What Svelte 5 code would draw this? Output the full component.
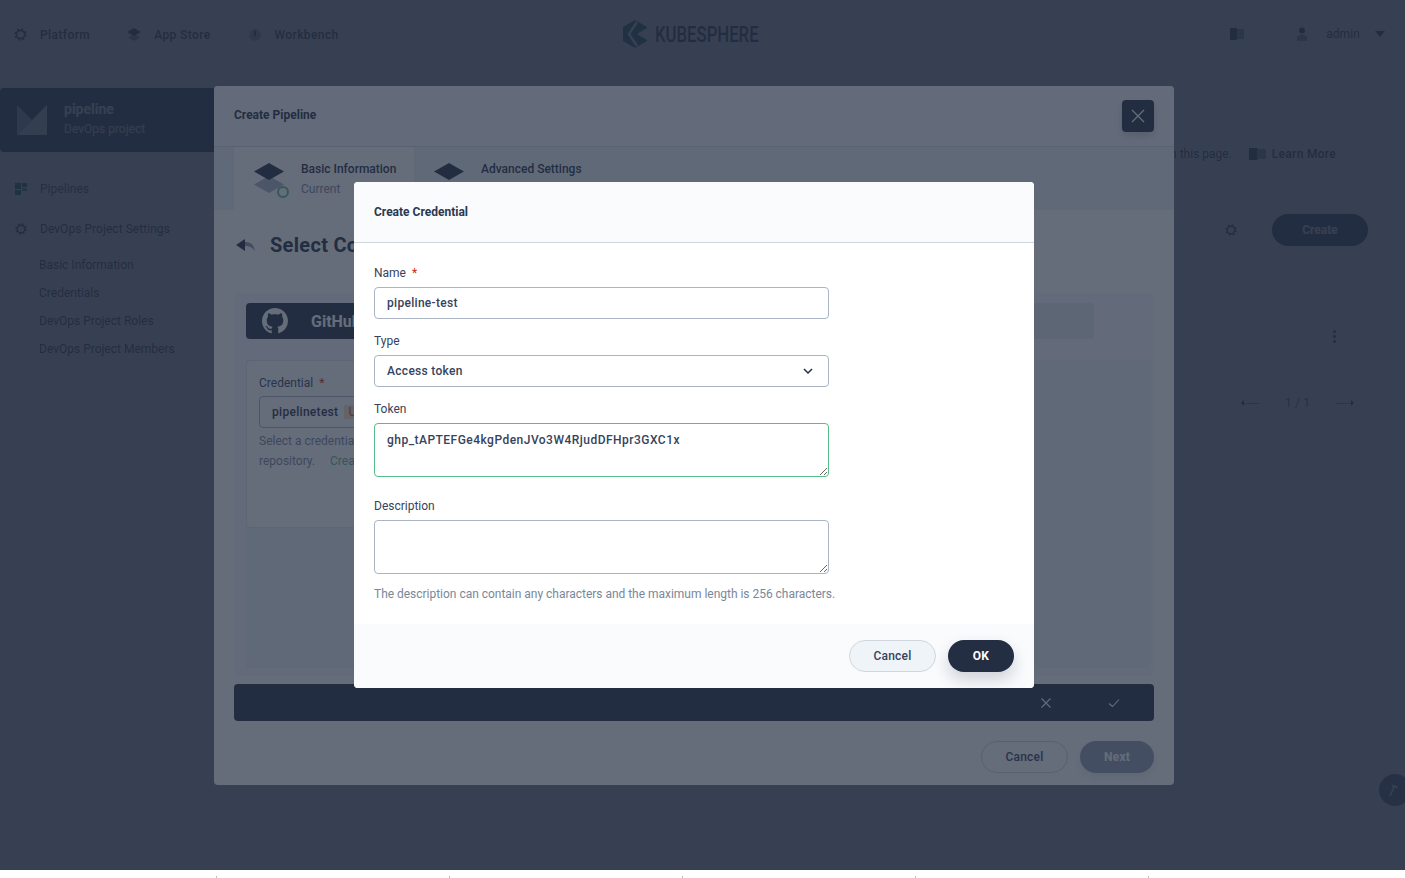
<script>
  const sideLinks = ['Basic Information', 'Credentials', 'DevOps Project Roles', 'DevOps Project Members'];
  const footerMarks = [1, 2, 3, 4, 5];
</script>

{#snippet gear(size)}
  <svg class="gear" width={size} height={size} viewBox="0 0 16 16" fill="none" stroke="currentColor">
    <circle cx="8" cy="8" r="5" stroke-width="1.800" />
    <circle cx="8" cy="8" r="6.800" stroke-width="1.600" stroke-dasharray="2.700 2.640" />
  </svg>
{/snippet}

{#snippet book(w, h)}
  <svg width={w} height={h} viewBox="0 0 14 12" preserveAspectRatio="none">
    <rect width="7" height="12" fill="#242e42" />
    <rect x="7" y="1" width="7" height="10" fill="#7f8ea3" />
  </svg>
{/snippet}

<div class="screen">
  <div class="page">
    <header class="topbar">
      <nav class="topnav">
        <span class="navitem">{@render gear(13)}Platform</span>
        <span class="navitem">
          <svg width="14" height="14" viewBox="0 0 14 14"><path d="M7 6l6 3.500-6 3.500-6-3.500z" fill="#7f8ea3" /><path d="M7 0l7 4-7 4-7-4z" fill="#242e42" /></svg>
          App Store
        </span>
        <span class="navitem">
          <svg width="14" height="14" viewBox="0 0 14 14"><circle cx="7" cy="7" r="6" fill="#a9b4c1" /><path d="M6 2.500h2V7L7 9 6 7z" fill="#242e42" /></svg>
          Workbench
        </span>
      </nav>
      <div class="logo">
        <svg width="28" height="28" viewBox="0 0 28 28">
          <path d="M13 0l12 7v14l-12 7-12-7V7z" fill="#0f5a60" />
          <path d="M15 2L7 14l8 12" fill="none" stroke="#fff" stroke-width="2.500" />
          <path d="M15 14l11-6.500v13z" fill="#fff" />
        </svg>
        <span class="wordmark">KUBESPHERE</span>
      </div>
      <div class="user">
        {@render book(14, 12)}
        <svg class="person" width="12" height="14" viewBox="0 0 12 14"><circle cx="6" cy="3.500" r="3" fill="#242e42" /><path d="M1 14V9.500L4 7.500h4l3 2V14z" fill="#7f8ea3" /></svg>
        <span class="username">admin</span>
        <span class="caret"></span>
      </div>
    </header>

    <div class="workspace">
      <aside class="sidebar">
        <div class="project">
          <svg width="30" height="30" viewBox="0 0 30 30">
            <path d="M0 0l15 15L0 30z" fill="#a9b4c1" />
            <path d="M30 0v30H0z" fill="#e3e9ef" />
          </svg>
          <div>
            <div class="project-name">pipeline</div>
            <div class="project-type">DevOps project</div>
          </div>
        </div>
        <div class="sidegroup first">
          <svg width="12" height="12" viewBox="0 0 12 12"><rect width="6" height="6" fill="#0f5a60" /><rect x="7" width="5" height="4" fill="#0f5a60" /><rect y="7" width="6" height="5" fill="#0f5a60" /><rect x="7" y="5" width="5" height="3" fill="#5d8a94" /></svg>
          <span class="active-link">Pipelines</span>
        </div>
        <div class="sidegroup">{@render gear(12)}DevOps Project Settings</div>
        <ul class="sidelinks">
          {#each sideLinks as link}
            <li>{link}</li>
          {/each}
        </ul>
      </aside>

      <main class="content">
        <p class="hint-line">
          <span>n this page.</span>
          {@render book(17, 12)}
          <span class="learn">Learn More</span>
        </p>
        <div class="toolbar">
          {@render gear(12)}
          <span class="create">Create</span>
        </div>
        <div class="more"><i></i><i></i><i></i></div>
        <div class="pager">
          <span class="arrow left"></span>
          <span>1 / 1</span>
          <span class="arrow right"></span>
        </div>
      </main>
    </div>

    <button class="tool" aria-label="Toolbox">
      <svg width="14" height="14" viewBox="0 0 14 14" stroke="#fff" fill="none"><path d="M4 13L8.500 3" stroke-width="1.600" /><path d="M6 2.500l5.500 2" stroke-width="2" /></svg>
    </button>

    <div class="overlay"></div>

    <section class="pipeline-modal">
      <div class="pm-head">
        <span>Create Pipeline</span>
        <button class="close" aria-label="Close">
          <svg width="16" height="16" viewBox="0 0 16 16" stroke="#fff" stroke-width="1.300" fill="none"><path d="M2 2l12 12M14 2L2 14" /></svg>
        </button>
      </div>
      <div class="steps">
        <div class="step active">
          <svg width="40" height="40" viewBox="0 0 40 40">
            <path d="M15 13l15 8.500-15 8.500L0 21.500z" fill="#a9b4c1" />
            <path d="M15 0l15 8.500-15 8.500L0 8.500z" fill="#242e42" />
            <circle cx="29" cy="29" r="5" fill="#fff" stroke="#55bc8a" stroke-width="2" />
          </svg>
          <div>
            <div class="step-title">Basic Information</div>
            <div class="step-sub">Current</div>
          </div>
        </div>
        <div class="step">
          <svg width="40" height="40" viewBox="0 0 40 40"><path d="M15 0l15 8.500-15 8.500L0 8.500z" fill="#242e42" /></svg>
          <div class="step-title">Advanced Settings</div>
        </div>
      </div>
      <div class="pm-body">
        <div class="repo-title">
          <svg width="20" height="16" viewBox="0 0 20 16">
            <path d="M9 2v12L0 8z" fill="#242e42" />
            <path d="M9 5c6 0 9 3 10 9-2-3-5-5-10-5z" fill="#8a98a8" />
          </svg>
          <h2>Select Code</h2>
        </div>
        <div class="repo-card">
          <div class="tabs">
            <div class="tab selected">
              <svg width="26" height="26" viewBox="0 0 16 16"><path fill="#fff" d="M8 0C3.580 0 0 3.580 0 8c0 3.540 2.290 6.530 5.470 7.590.4.070.55-.17.55-.38 0-.19-.01-.82-.01-1.490-2.010.37-2.530-.49-2.690-.94-.09-.23-.48-.94-.82-1.130-.28-.15-.68-.52-.01-.53.63-.01 1.080.58 1.230.82.72 1.210 1.870.87 2.330.66.07-.52.28-.87.51-1.070-1.780-.2-3.640-.89-3.640-3.950 0-.87.31-1.590.82-2.150-.08-.2-.36-1.020.08-2.120 0 0 .67-.21 2.200.82.64-.18 1.320-.27 2-.27.68 0 1.360.09 2 .27 1.530-1.040 2.200-.82 2.200-.82.44 1.100.16 1.920.08 2.120.51.56.82 1.270.82 2.150 0 3.070-1.870 3.750-3.650 3.950.29.25.54.73.54 1.480 0 1.070-.01 1.930-.01 2.200 0 .21.15.46.55.38A8.013 8.013 0 0016 8c0-4.420-3.580-8-8-8z" /></svg>
              <span>GitHub</span>
            </div>
            <div class="tab rest"></div>
          </div>
          <div class="repo-panels">
            <div class="cred-form">
              <div class="cred-label">Credential <b>*</b></div>
              <div class="cred-select">pipelinetest <span class="tag">U</span></div>
              <p class="cred-hint">Select a credential<br />repository. <span class="link">Create</span></p>
            </div>
            <div class="repo-list"></div>
          </div>
        </div>
        <div class="confirm-bar">
          <svg width="12" height="12" viewBox="0 0 12 12" stroke="#fff" stroke-width="1.100" fill="none"><path d="M1.500 1.500l9 9M10.500 1.500l-9 9" /></svg>
          <svg width="14" height="12" viewBox="0 0 14 12" stroke="#fff" stroke-width="1.100" fill="none"><path d="M2 6.500l3.500 3L12 2.500" /></svg>
        </div>
        <div class="pm-foot">
          <span class="btn ghost">Cancel</span>
          <span class="btn disabled">Next</span>
        </div>
      </div>
    </section>

    <div class="overlay"></div>

    <section class="cred-modal">
      <div class="cm-head">Create Credential</div>
      <form class="cm-body">
        <label class="field-label" for="cred-name">Name <b>*</b></label>
        <input id="cred-name" class="field" value="pipeline-test" />

        <label class="field-label gap" for="cred-type">Type</label>
        <div id="cred-type" class="field select">
          <span>Access token</span>
          <svg width="12" height="12" viewBox="0 0 12 12" fill="none" stroke="#242e42" stroke-width="1.500"><path d="M2 4l4 4 4-4" /></svg>
        </div>

        <label class="field-label gap" for="cred-token">Token</label>
        <textarea id="cred-token" class="field area focus">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</textarea>

        <label class="field-label gap-lg" for="cred-desc">Description</label>
        <textarea id="cred-desc" class="field area"></textarea>
        <p class="desc">The description can contain any characters and the maximum length is 256 characters.</p>
      </form>
      <div class="cm-foot">
        <span class="btn light">Cancel</span>
        <span class="btn primary">OK</span>
      </div>
    </section>
  </div>

  <div class="marks">
    {#each footerMarks as mark (mark)}
      <i></i>
    {/each}
  </div>
</div>

<style>
  :global(body) {
    margin: 0;
    background: #fff;
  }

  .screen {
    width: 1405px;
    height: 878px;
    overflow: hidden;
    font-family: Roboto, "Liberation Sans", sans-serif;
    font-size: 12px;
    color: #242e42;
  }

  .page {
    position: relative;
    height: 870px;
    background: #ffffff;
    overflow: hidden;
  }

  .marks {
    display: flex;
    gap: 232px;
    padding: 6px 0 0 216px;
  }

  .marks i {
    width: 1px;
    height: 2px;
    background: #b5bcc6;
  }

  .overlay {
    position: absolute;
    inset: 0;
    background: rgba(35, 45, 65, 0.7);
  }

  /* page under the dialogs */
  .topbar {
    position: relative;
    display: flex;
    align-items: center;
    justify-content: space-between;
    height: 68px;
    padding: 0 20px 0 14px;
  }

  .topnav {
    display: flex;
    gap: 37px;
    padding-top: 1px;
  }

  .navitem {
    display: flex;
    align-items: center;
    gap: 13px;
    font-weight: 500;
    letter-spacing: 0.4px;
  }

  .logo {
    position: absolute;
    left: 622px;
    top: 20px;
    display: flex;
    align-items: center;
    gap: 5px;
  }

  .wordmark {
    display: inline-block;
    font-size: 22px;
    font-weight: 500;
    transform: scaleX(0.76);
    transform-origin: left center;
    white-space: nowrap;
  }

  .user {
    display: flex;
    align-items: center;
    gap: 8px;
  }

  .person {
    margin-left: 44px;
  }

  .username {
    margin-left: 10px;
    font-size: 12px;
    letter-spacing: 0.1px;
  }

  .caret {
    margin-left: 7px;
    border: 5px solid transparent;
    border-top: 6px solid #242e42;
    border-bottom: 0;
  }

  .workspace {
    display: flex;
    padding-top: 20px;
  }

  .sidebar {
    width: 220px;
  }

  .project {
    display: flex;
    align-items: center;
    gap: 17px;
    height: 64px;
    padding-left: 17px;
    background: #242e42;
    border-radius: 4px;
    box-sizing: border-box;
  }

  .project-name {
    margin-top: -2px;
    font-size: 14px;
    font-weight: 700;
    line-height: 20px;
    color: #fff;
  }

  .project-type {
    line-height: 20px;
    color: #e3e9ef;
  }

  .sidegroup {
    display: flex;
    align-items: center;
    gap: 13px;
    height: 20px;
    margin-top: 20px;
    padding-left: 15px;
    letter-spacing: 0.05px;
  }

  .sidegroup.first {
    margin-top: 27px;
  }

  .active-link {
    color: #2e4050;
  }

  .sidelinks {
    list-style: none;
    margin: 12px 0 0;
    padding: 0 0 0 39px;
  }

  .sidelinks li {
    height: 28px;
    line-height: 28px;
  }

  .content {
    flex: 1;
    padding-right: 37px;
  }

  .hint-line {
    display: flex;
    align-items: center;
    justify-content: flex-end;
    gap: 6px;
    height: 20px;
    margin: 56px 32px 0 0;
  }

  .hint-line span:first-child {
    margin-right: 11px;
  }

  .learn {
    font-weight: 500;
    letter-spacing: 0.3px;
  }

  .toolbar {
    display: flex;
    align-items: center;
    justify-content: flex-end;
    gap: 35px;
    margin-top: 50px;
  }

  .create {
    width: 96px;
    height: 32px;
    line-height: 32px;
    text-align: center;
    font-weight: 700;
    color: #fff;
    background: #242e42;
    border-radius: 16px;
  }

  .more {
    display: flex;
    flex-direction: column;
    align-items: flex-end;
    gap: 2px;
    margin: 84px 32px 0 0;
  }

  .more i {
    width: 3px;
    height: 3px;
    background: #242e42;
    border-radius: 50%;
  }

  .pager {
    display: flex;
    align-items: center;
    justify-content: flex-end;
    gap: 26px;
    margin-top: 53px;
    padding-right: 15px;
    color: #4a5974;
    letter-spacing: 0.1px;
  }

  .arrow {
    position: relative;
    width: 17px;
    height: 1px;
    background: #7f8ea3;
  }

  .arrow::after {
    content: "";
    position: absolute;
    top: -3px;
    border: 3.500px solid transparent;
  }

  .arrow.left::after {
    left: -1px;
    border-right-color: #242e42;
    border-left: 0;
  }

  .arrow.right::after {
    right: -1px;
    border-left-color: #242e42;
    border-right: 0;
  }

  .tool {
    position: absolute;
    left: 1379px;
    top: 774px;
    width: 32px;
    height: 32px;
    padding: 0 0 0 7px;
    display: flex;
    align-items: center;
    border: 0;
    border-radius: 50%;
    background: #4a5974;
  }

  /* Create Pipeline dialog */
  .pipeline-modal {
    position: absolute;
    left: 214px;
    top: 86px;
    display: flex;
    flex-direction: column;
    width: 960px;
    height: 699px;
    background: #fff;
    border-radius: 4px;
    overflow: hidden;
  }

  .pm-head {
    display: flex;
    align-items: center;
    justify-content: space-between;
    flex: none;
    height: 61px;
    padding: 0 20px;
    font-weight: 700;
    background: #f9fbfd;
    border-bottom: 1px solid #d8dee5;
    box-sizing: border-box;
  }

  .pm-head span {
    margin-top: -2px;
  }

  .close {
    display: flex;
    align-items: center;
    justify-content: center;
    width: 32px;
    height: 32px;
    padding: 0;
    border: 0;
    border-radius: 4px;
    background: #242e42;
    box-shadow: 0 4px 8px rgba(35, 45, 65, 0.2);
  }

  .steps {
    display: flex;
    flex: none;
    height: 63px;
    padding-left: 20px;
    background: #eff4f9;
    box-sizing: border-box;
  }

  .step {
    display: flex;
    gap: 7px;
    width: 180px;
    padding: 16px 0 0 20px;
    box-sizing: border-box;
  }

  .step.active {
    background: #fff;
  }

  .step-title {
    font-weight: 500;
    line-height: 12px;
  }

  .step-sub {
    margin-top: 8px;
    line-height: 12px;
    color: #79879c;
  }

  .pm-body {
    flex: 1;
    display: flex;
    flex-direction: column;
    padding: 0 20px;
  }

  .repo-title {
    display: flex;
    align-items: center;
    gap: 14px;
    height: 28px;
    margin-top: 21px;
    padding-left: 2px;
  }

  .repo-title h2 {
    margin: 0;
    font-size: 20px;
    font-weight: 700;
    line-height: 28px;
    letter-spacing: 0.3px;
    white-space: nowrap;
  }

  .repo-card {
    height: 383px;
    margin-top: 34px;
    padding: 10px 4px 0 12px;
    background: #f9fbfd;
    border-radius: 4px;
    box-sizing: border-box;
  }

  .tabs {
    display: flex;
    height: 36px;
    margin-right: 56px;
    background: #e3e9ef;
    border-radius: 4px;
  }

  .tab.selected {
    display: flex;
    align-items: center;
    gap: 23px;
    width: 180px;
    padding-left: 16px;
    box-sizing: border-box;
    font-size: 16px;
    font-weight: 700;
    color: #fff;
    background: #242e42;
    border-radius: 4px;
  }

  .tab.rest {
    flex: 1;
  }

  .repo-panels {
    display: flex;
    height: 308px;
    margin-top: 21px;
    background: #eff4f9;
  }

  .cred-form {
    width: 400px;
    height: 168px;
    padding: 12px 12px 0;
    background: #fff;
    border: 1px solid #e3e9ef;
    border-radius: 4px;
    box-sizing: border-box;
  }

  .cred-label {
    line-height: 20px;
    color: #36435c;
  }

  .cred-label b {
    margin-left: 3px;
    font-weight: 400;
    color: #ca2621;
  }

  .cred-select {
    display: flex;
    align-items: center;
    gap: 6px;
    height: 32px;
    margin-top: 3px;
    padding-left: 12px;
    font-weight: 500;
    border: 1px solid #abb4c4;
    border-radius: 4px;
    box-sizing: border-box;
    letter-spacing: 0.3px;
  }

  .tag {
    padding: 0 4px;
    color: #c7722b;
    background: #ffe1be;
    border-radius: 2px;
  }

  .cred-hint {
    margin: 3px 0 0;
    line-height: 20px;
    color: #79879c;
    white-space: nowrap;
  }

  .link {
    margin-left: 12px;
    color: #55bc8a;
  }

  .repo-list {
    flex: 1;
  }

  .confirm-bar {
    display: flex;
    align-items: center;
    justify-content: flex-end;
    gap: 55px;
    flex: none;
    height: 37px;
    margin-top: 8px;
    padding: 0 33px 0 0;
    background: #242e42;
    border-radius: 4px;
    box-sizing: border-box;
  }

  .pm-foot {
    display: flex;
    justify-content: flex-end;
    gap: 12px;
    margin-top: 20px;
  }

  .btn {
    display: inline-flex;
    align-items: center;
    justify-content: center;
    height: 32px;
    border-radius: 16px;
    box-sizing: border-box;
    letter-spacing: 0.2px;
  }

  .btn.ghost {
    width: 87px;
    font-weight: 500;
    color: #36435c;
    border: 1px solid #d1d7df;
  }

  .btn.disabled {
    width: 74px;
    font-weight: 700;
    color: #fff;
    background: #8f9bad;
    box-shadow: 0 4px 8px rgba(35, 45, 65, 0.1);
  }

  /* Create Credential dialog */
  .cred-modal {
    position: absolute;
    left: 354px;
    top: 182px;
    display: flex;
    flex-direction: column;
    width: 680px;
    height: 506px;
    background: #fff;
    border-radius: 4px;
    overflow: hidden;
  }

  .cm-head {
    flex: none;
    height: 61px;
    padding: 20px 20px 0;
    line-height: 20px;
    font-weight: 700;
    color: #2c3850;
    background: #f9fbfd;
    border-bottom: 1px solid #d1d7df;
    box-sizing: border-box;
  }

  .cm-body {
    flex: 1;
    display: flex;
    flex-direction: column;
    padding: 19px 20px 0;
  }

  .field-label {
    padding-top: 1px;
    line-height: 20px;
    margin-bottom: 4px;
    color: #36435c;
  }

  .field-label b {
    margin-left: 3px;
    font-weight: 400;
    color: #ca2621;
  }

  .field-label.gap {
    margin-top: 11px;
  }

  .field-label.gap-lg {
    margin-top: 18px;
  }

  .field {
    display: block;
    width: 455px;
    height: 32px;
    margin: 0;
    padding: 0 12px;
    font: 500 12px/20px Roboto, "Liberation Sans", sans-serif;
    color: #36435c;
    letter-spacing: 0.3px;
    background: #fff;
    border: 1px solid #abb4c4;
    border-radius: 4px;
    box-sizing: border-box;
    outline: none;
  }

  .select {
    display: flex;
    align-items: center;
    justify-content: space-between;
    padding-right: 14px;
  }

  .area {
    height: 54px;
    padding: 6px 12px;
    resize: vertical;
  }

  .focus {
    border-color: #55bc8a;
    letter-spacing: 0.475px;
  }

  .desc {
    margin: 10px 0 0;
    line-height: 20px;
    color: #79879c;
    letter-spacing: -0.02px;
    white-space: nowrap;
  }

  .cm-foot {
    display: flex;
    align-items: center;
    justify-content: flex-end;
    gap: 12px;
    flex: none;
    height: 64px;
    padding-right: 20px;
    background: #f9fbfd;
  }

  .btn.light {
    width: 87px;
    font-weight: 500;
    color: #36435c;
    background: #eff4f9;
    border: 1px solid #d1d7df;
  }

  .btn.primary {
    width: 66px;
    font-weight: 700;
    color: #fff;
    background: #242e42;
    box-shadow: 0 8px 16px rgba(35, 45, 65, 0.2);
  }
</style>
